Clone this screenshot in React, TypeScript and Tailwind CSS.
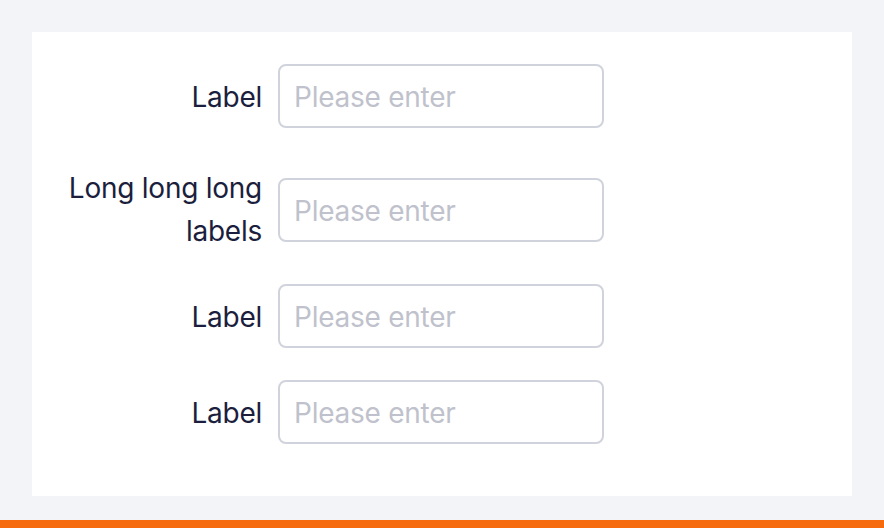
const rows = [
  { label: "Label" },
  { label: "Long long long labels", long: true },
  { label: "Label" },
  { label: "Label" },
];

function Field({ label, long }: { label: string; long?: boolean }) {
  if (long) {
    return (
      <div className="flex h-[92px] items-start mb-8">
        <label className="w-[214px] shrink-0 pr-4 pt-[7px] text-right leading-[43px] text-[#1b1e3d]">
          {label}
        </label>
        <input
          placeholder="Please enter"
          className="mt-[18px] h-16 w-[326px] rounded-lg border-2 border-[#d0d3dc] pl-[14px] pr-4 pt-[2px] text-[#1b1e3d] outline-none placeholder:text-[#bfc2cc]"
        />
      </div>
    );
  }
  return (
    <div className="flex h-16 items-center mb-8 last:mb-0">
      <label className="w-[214px] shrink-0 pr-4 pt-[2px] text-right leading-[44px] text-[#1b1e3d]">{label}</label>
      <input
        placeholder="Please enter"
        className="h-16 w-[326px] rounded-lg border-2 border-[#d0d3dc] pl-[14px] pr-4 pt-[2px] text-[#1b1e3d] outline-none placeholder:text-[#bfc2cc]"
      />
    </div>
  );
}

export default function App() {
  return (
    <div
      className="min-h-[528px] w-[884px] bg-[#f3f4f8] text-[28px] tracking-[-0.25px]"
      style={{ fontFamily: "Inter, 'Noto Sans', sans-serif" }}
    >
      <div className="p-8 pb-6">
        <div className="h-[464px] bg-white px-8 pt-8">
          {rows.map((r, i) => (
            <Field key={i} label={r.label} long={r.long} />
          ))}
        </div>
      </div>
      <div className="h-2 bg-[#f56b0d]" />
    </div>
  );
}
